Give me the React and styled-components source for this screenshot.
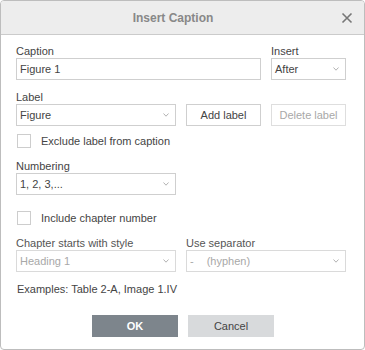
import React from 'react';
import styled, {createGlobalStyle} from 'styled-components';

const GlobalStyle = createGlobalStyle`
    html, body {
        margin: 0;
        padding: 0;
        background: #ffffff;
    }
    * {
        box-sizing: border-box;
    }
`;

const Dialog = styled.div`
    width: 365px;
    height: 350px;
    border: 1px solid #bdbdbd;
    border-radius: 4px;
    background: #fff;
    overflow: hidden;
    font-family: "Liberation Sans", Arial, sans-serif;
    font-size: 11px;
    color: #444;
    display: flex;
    flex-direction: column;
`;

const Header = styled.div`
    height: 34px;
    flex: none;
    background: #ededed;
    border-bottom: 1px solid #cbcbcb;
    position: relative;
    display: flex;
    align-items: center;
    justify-content: center;
    padding-right: 19px;
`;

const Title = styled.div`
    font-size: 12px;
    font-weight: bold;
    color: #888;
`;

const Close = styled.button`
    position: absolute;
    right: 11px;
    top: 11px;
    width: 12px;
    height: 12px;
    padding: 0;
    border: 0;
    background: none;
    display: flex;
`;

const Body = styled.div`
    padding: 9px 17px 0 15px;
    display: flex;
    flex-direction: column;
`;

const Row = styled.div`
    display: grid;
    grid-template-columns: ${(p) => p.$cols || '1fr'};
    column-gap: 10px;
    margin-top: ${(p) => p.$mt || 0}px;
`;

const Field = styled.div`
    display: flex;
    flex-direction: column;
    min-width: 0;
`;

const Label = styled.div`
    line-height: 14px;
    height: 14px;
    color: ${(p) => (p.$muted ? '#555' : '#444')};
    white-space: nowrap;
`;

const Input = styled.div`
    height: 22px;
    border: 1px solid #cfcfcf;
    padding: 0 3px;
    line-height: 20px;
    color: #444;
`;

const SelectBox = styled.div`
    height: 22px;
    border: 1px solid ${(p) => (p.$disabled ? '#dadada' : '#cfcfcf')};
    padding: 0 3px;
    line-height: 20px;
    color: ${(p) => (p.$disabled ? '#a8a8a8' : '#444')};
    display: flex;
    align-items: center;
    justify-content: space-between;
    white-space: nowrap;
`;

const Chevron = styled.svg`
    width: 6px;
    height: 4px;
    margin-right: 3px;
    flex: none;
`;

const Button = styled.div`
    height: 22px;
    border: 1px solid ${(p) => (p.$disabled ? '#dedede' : '#cfcfcf')};
    color: ${(p) => (p.$disabled ? '#a8a8a8' : '#444')};
    display: flex;
    align-items: center;
    justify-content: center;
    white-space: nowrap;
`;

const CheckRow = styled.label`
    display: flex;
    align-items: center;
    gap: 10px;
    height: 14px;
    margin-top: ${(p) => p.$mt}px;
    margin-left: 1px;
`;

const Box = styled.span`
    width: 14px;
    height: 14px;
    border: 1px solid #cdcdcd;
    background: #fff;
    flex: none;
`;

const Examples = styled.div`
    line-height: 14px;
    margin-top: 10px;
    margin-left: 1px;
`;

const Hyphen = styled.span`
    margin-left: 13px;
`;

const Footer = styled.div`
    display: flex;
    justify-content: center;
    gap: 10px;
    margin-top: 19px;
    padding-left: 3px;
`;

const FootButton = styled.div`
    width: 86px;
    height: 22px;
    display: flex;
    align-items: center;
    justify-content: center;
    font-size: 11px;
    background: ${(p) => (p.$primary ? '#7d858c' : '#d8dadc')};
    color: ${(p) => (p.$primary ? '#fff' : '#444')};
    font-weight: ${(p) => (p.$primary ? 'bold' : 'normal')};
`;

const Select = ({children, disabled}) => (
    <SelectBox $disabled={disabled}>
        <span>{children}</span>
        <Chevron viewBox="0 0 6 4">
            <path d="M0.5 0.5 L3 3.2 L5.5 0.5" fill="none" stroke="#a0a0a0" strokeWidth="0.8" />
        </Chevron>
    </SelectBox>
);

export default function App() {
    return (
        <>
            <GlobalStyle />
            <Dialog>
                <Header>
                    <Title>Insert Caption</Title>
                    <Close aria-label="close">
                        <svg width="12" height="12" viewBox="0 0 12 12">
                            <path d="M1.5 1.5 L10.5 10.5 M10.5 1.5 L1.5 10.5" stroke="#777" strokeWidth="1.6" />
                        </svg>
                    </Close>
                </Header>
                <Body>
                    <Row $cols="245px 75px">
                        <Field>
                            <Label>Caption</Label>
                            <Input>Figure 1</Input>
                        </Field>
                        <Field>
                            <Label>Insert</Label>
                            <Select>After</Select>
                        </Field>
                    </Row>
                    <Row $cols="160px 75px 75px" $mt={10}>
                        <Field>
                            <Label>Label</Label>
                            <Select>Figure</Select>
                        </Field>
                        <Field>
                            <Label />
                            <Button>Add label</Button>
                        </Field>
                        <Field>
                            <Label />
                            <Button $disabled>Delete label</Button>
                        </Field>
                    </Row>
                    <CheckRow $mt={8}>
                        <Box />
                        <span>Exclude label from caption</span>
                    </CheckRow>
                    <Row $cols="160px" $mt={11}>
                        <Field>
                            <Label>Numbering</Label>
                            <Select>1, 2, 3,...</Select>
                        </Field>
                    </Row>
                    <CheckRow $mt={16}>
                        <Box />
                        <span>Include chapter number</span>
                    </CheckRow>
                    <Row $cols="160px 160px" $mt={11}>
                        <Field>
                            <Label $muted>Chapter starts with style</Label>
                            <Select disabled>Heading 1</Select>
                        </Field>
                        <Field>
                            <Label $muted>Use separator</Label>
                            <Select disabled>
                                -<Hyphen>(hyphen)</Hyphen>
                            </Select>
                        </Field>
                    </Row>
                    <Examples>Examples: Table 2-A, Image 1.IV</Examples>
                    <Footer>
                        <FootButton $primary>OK</FootButton>
                        <FootButton>Cancel</FootButton>
                    </Footer>
                </Body>
            </Dialog>
        </>
    );
}
